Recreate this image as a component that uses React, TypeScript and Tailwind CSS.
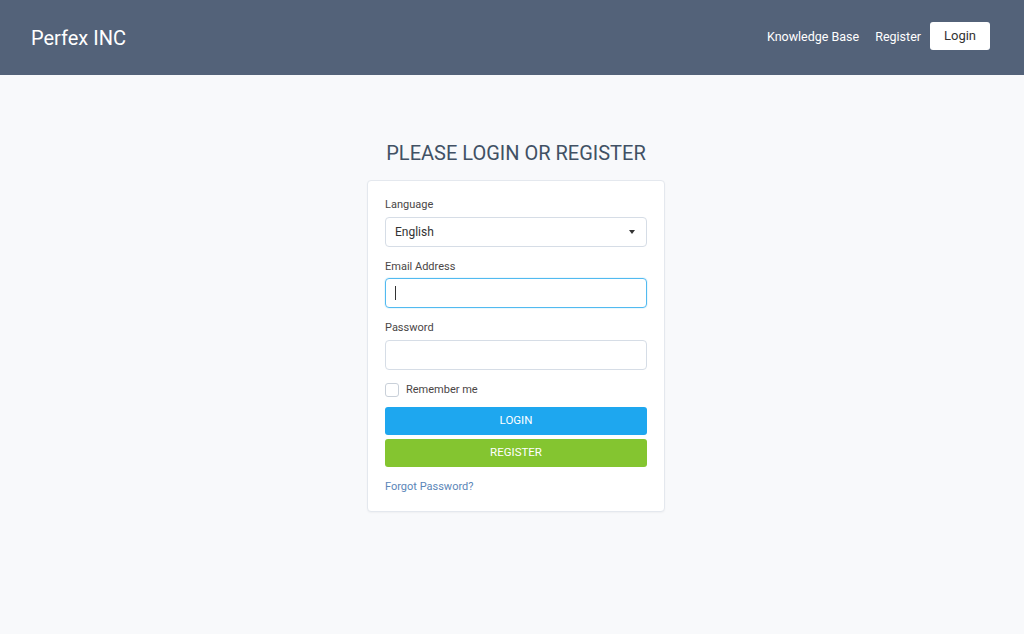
import React, { useState } from 'react';

function App() {
  const [remember, setRemember] = useState(false);

  return (
    <div className="min-h-screen bg-[#f8f9fb] font-['Roboto',sans-serif]">
      {/* Header */}
      <header className="bg-[#536279] h-[75px] flex items-center justify-between pl-[31px] pr-[34px]">
        <a href="#" className="text-white text-[20px] leading-none">
          Perfex INC
        </a>
        <nav className="flex items-center text-[12.5px] text-white">
          <a href="#" className="mr-4">Knowledge Base</a>
          <a href="#" className="mr-[9px]">Register</a>
          <a
            href="#"
            className="bg-white text-[#333] text-[13px] rounded-[3px] w-[60px] h-[28px] mb-[4px] flex items-center justify-center"
          >
            Login
          </a>
        </nav>
      </header>

      {/* Main Content */}
      <main className="flex flex-col items-center pt-[66px] pl-[8px]">
        <h1 className="text-[20px] leading-[24px] text-[#415164] mb-[15px]">
          PLEASE LOGIN OR REGISTER
        </h1>
        <div className="w-[298px] bg-white border border-[#e4e8ee] rounded-[4px] shadow-[0_1px_2px_rgba(0,0,0,0.04)] px-[17px] pt-[15px] pb-[16px]">
          <label className="block text-[11px] leading-[17px] text-[#4a4646] mb-1">Language</label>
          <div className="relative">
            <select className="w-full h-[30px] appearance-none border border-[#d6dde6] rounded-[4px] bg-white px-[9px] text-[12px] text-[#333] outline-none">
              <option>English</option>
            </select>
            <span className="absolute right-[12px] top-[13px] w-0 h-0 border-l-[3.5px] border-r-[3.5px] border-t-[4px] border-l-transparent border-r-transparent border-t-[#333]" />
          </div>

          <label className="block text-[11px] leading-[17px] text-[#4a4646] mt-[11px] mb-[3px]">Email Address</label>
          <div className="relative">
            <input
              type="email"
              className="w-full h-[30px] border border-[#52baf0] rounded-[4px] bg-white px-[10px] text-[12px] outline-none shadow-[0_0_0_1px_rgba(3,169,244,0.08)]"
            />
            <span className="absolute left-[10px] top-[8px] w-px h-[14px] bg-[#333]" />
          </div>

          <label className="block text-[11px] leading-[17px] text-[#4a4646] mt-[11px] mb-1">Password</label>
          <input
            type="password"
            className="w-full h-[30px] border border-[#d6dde6] rounded-[4px] bg-white px-[10px] text-[12px] outline-none"
          />

          <label className="flex items-center mt-[12px] cursor-pointer">
            <input
              type="checkbox"
              checked={remember}
              onChange={() => setRemember(!remember)}
              className="appearance-none w-[14px] h-[14px] border border-[#c9d0d9] rounded-[3px] bg-white mr-[7px]"
            />
            <span className="text-[11px] text-[#4a4646]">Remember me</span>
          </label>

          <button className="w-full h-[28px] mt-[8px] bg-[#1ea7ef] rounded-[3px] text-white text-[11.5px]">
            LOGIN
          </button>
          <button className="w-full h-[28px] mt-[4px] bg-[#84c530] rounded-[3px] text-white text-[11.5px]">
            REGISTER
          </button>

          <a href="#" className="block mt-[11px] text-[11px] leading-[17px] text-[#5b86b8]">
            Forgot Password?
          </a>
        </div>
      </main>
    </div>
  );
}

export default App;
